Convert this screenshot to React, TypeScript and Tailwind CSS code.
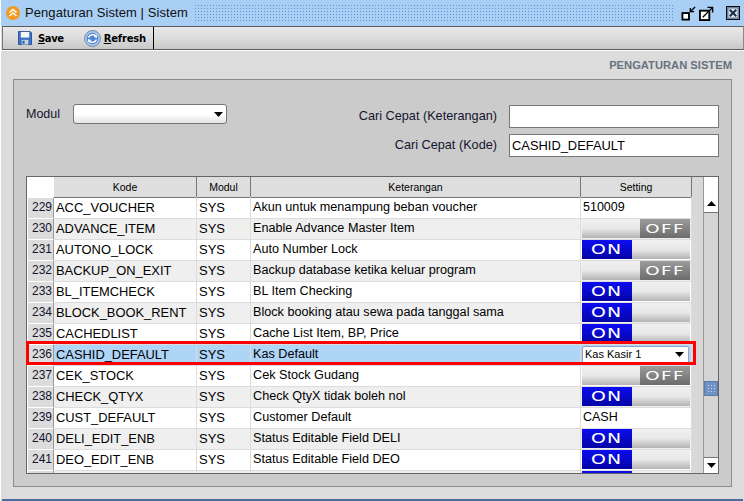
import React from "react";

const rows: [string, string, string, string, string][] = [
  ["229", "ACC_VOUCHER", "SYS", "Akun untuk menampung beban voucher", "510009"],
  ["230", "ADVANCE_ITEM", "SYS", "Enable Advance Master Item", "off"],
  ["231", "AUTONO_LOCK", "SYS", "Auto Number Lock", "on"],
  ["232", "BACKUP_ON_EXIT", "SYS", "Backup database ketika keluar program", "off"],
  ["233", "BL_ITEMCHECK", "SYS", "BL Item Checking", "on"],
  ["234", "BLOCK_BOOK_RENT", "SYS", "Block booking atau sewa pada tanggal sama", "on"],
  ["235", "CACHEDLIST", "SYS", "Cache List Item, BP, Price", "on"],
  ["236", "CASHID_DEFAULT", "SYS", "Kas Default", "select"],
  ["237", "CEK_STOCK", "SYS", "Cek Stock Gudang", "off"],
  ["238", "CHECK_QTYX", "SYS", "Check QtyX tidak boleh nol", "on"],
  ["239", "CUST_DEFAULT", "SYS", "Customer Default", "CASH"],
  ["240", "DELI_EDIT_ENB", "SYS", "Status Editable Field DELI", "on"],
  ["241", "DEO_EDIT_ENB", "SYS", "Status Editable Field DEO", "on"],
  ["", "", "", "", "blank"],
];

const cols = "grid grid-cols-[27px_143px_54px_330px_111px]";

function Arrow({ up }: { up?: boolean }) {
  return (
    <svg width="9" height="5" viewBox="0 0 9 5" className="block">
      <polygon points={up ? "4.5,0 9,5 0,5" : "0,0 9,0 4.5,5"} fill="#000" />
    </svg>
  );
}

const grayPart = "flex-1 bg-gradient-to-b from-[#f0f0f0] via-[#e8e8e8] to-[#b4b4b4]";

function Toggle({ kind }: { kind: string }) {
  return (
    <div className="ml-[1px] flex h-[19px] w-[108px] overflow-hidden leading-[19px] text-white [font-family:'DejaVu_Sans',sans-serif]">
      {kind !== "off" ? (
        <>
          <div className="flex w-[50px] items-center justify-center bg-gradient-to-b from-[#0c0cf2] to-[#0505a6]">
            {kind === "on" && <span className="inline-block scale-x-[1.35] text-[14px] tracking-[1px]">ON</span>}
          </div>
          <div className={grayPart} />
        </>
      ) : (
        <>
          <div className={grayPart} />
          <div className="flex w-[50px] items-center justify-center bg-gradient-to-b from-[#9c9c9c] to-[#6c6c6c]">
            <span className="inline-block scale-x-[1.4] text-[13px] tracking-[1px]">OFF</span>
          </div>
        </>
      )}
    </div>
  );
}

function Setting({ v }: { v: string }) {
  if (v === "on" || v === "off" || v === "blank") return <Toggle kind={v} />;
  if (v === "select")
    return (
      <div className="ml-[1px] flex h-[18px] w-[107px] items-center justify-between rounded-[2px] border border-[#8ea4c4] bg-white pl-[2px] pr-[4px] text-[11px] leading-none">
        <span>Kas Kasir 1</span>
        <Arrow />
      </div>
    );
  return <span className="pl-[2px] text-[12.5px]">{v}</span>;
}

function Save() {
  return (
    <svg width="14" height="14" viewBox="0 0 15 15" className="shrink-0">
      <path d="M0.5 0.5H13L14.5 2V14.5H0.5Z" fill="#3f73c8" stroke="#27508f" />
      <rect x="3" y="1" width="9" height="6" fill="#f4f6fa" />
      <rect x="4" y="9.5" width="7" height="5" fill="#c9d4e6" />
      <rect x="5" y="10.5" width="2" height="3" fill="#27508f" />
    </svg>
  );
}

function Refresh() {
  return (
    <svg width="17" height="17" viewBox="0 0 17 17" className="block">
      <circle cx="8.5" cy="8.5" r="8" fill="#a9c4e6" stroke="#6f8db5" />
      <circle cx="8.5" cy="8.5" r="5.8" fill="#4f86d8" />
      <path d="M4.5 7.5A4.2 4.2 0 0 1 12 6.5" fill="none" stroke="#fff" strokeWidth="1.5" />
      <path d="M12.5 9.5A4.2 4.2 0 0 1 5 10.5" fill="none" stroke="#fff" strokeWidth="1.5" />
      <polygon points="12.8,4.5 13,8 9.8,7" fill="#fff" />
      <polygon points="4.2,12.5 4,9 7.2,10" fill="#fff" />
    </svg>
  );
}

export default function App() {
  return (
    <div className="relative flex h-[501px] w-[744px] flex-col overflow-hidden border-l border-l-white bg-[#dcdcdc] text-[12px] text-black [font-family:'Liberation_Sans',Arial,sans-serif]">
      <div className="flex h-[26px] shrink-0 items-center bg-[#a9cff5] pl-[5px] pr-[4px]">
        <svg width="14" height="14" viewBox="0 0 14 14" className="shrink-0">
          <circle cx="7" cy="7" r="7" fill="#f29a1f" />
          <path d="M3.5 6.5L7 3.5L10.5 6.5M3.5 10L7 7L10.5 10" fill="none" stroke="#fff" strokeWidth="1.6" />
        </svg>
        <span className="ml-[5px] whitespace-nowrap text-[13px] tracking-[0.08px] text-[#111]">Pengaturan Sistem | Sistem</span>
        <div className="ml-[6px] h-[18px] flex-1 bg-[radial-gradient(#5d92d2_0.9px,transparent_1px)] [background-size:3px_3px]" />
        <div className="ml-[6px] flex items-center">
          <svg width="15" height="15" viewBox="0 0 16 16">
            <rect x="1.5" y="7.5" width="7" height="7" fill="#fff" stroke="#000" strokeWidth="2" />
            <path d="M15 1L10 6M10 2V6H14" fill="none" stroke="#000" strokeWidth="1.5" />
          </svg>
          <svg width="15" height="15" viewBox="0 0 16 16" className="ml-[3px]">
            <rect x="1" y="5" width="10" height="10" fill="#fff" stroke="#000" strokeWidth="2" />
            <path d="M4 12L14 2M9 1.5H14.5V7" fill="none" stroke="#000" strokeWidth="1.5" />
          </svg>
          <svg width="14" height="14" viewBox="0 0 15 15" className="ml-[12px]">
            <rect x="0.5" y="0.5" width="14" height="14" fill="#a9cff5" stroke="#000" />
            <rect x="2" y="2" width="11" height="11" fill="#d7e5f5" stroke="#40506a" />
            <path d="M4 4L11 11M11 4L4 11" stroke="#1a2a44" strokeWidth="2" />
          </svg>
        </div>
      </div>

      <div className="ml-[1px] flex h-[24px] shrink-0 border-y border-y-[#5a5a5a] border-l border-l-[#777] border-r border-r-[#8a8a8a] bg-gradient-to-b from-[#e8e8e8] via-[#dcdcdc] to-[#c8c8c8]">
        <div className="flex h-full w-[151px] items-center border-r border-r-black pl-[15px] text-[10px] font-bold [font-family:'DejaVu_Sans',sans-serif]">
          <Save />
          <span className="ml-[6px] tracking-[-0.4px]"><u>S</u>ave</span>
          <span className="ml-[20px]"><Refresh /></span>
          <span className="ml-[3px] tracking-[-0.2px]"><u>R</u>efresh</span>
        </div>
      </div>
      <div className="h-[1px] shrink-0 bg-white" />

      <div className="flex flex-1 flex-col pb-[14px] pl-[12px] pr-[12px]">
        <div className="h-[28px] shrink-0 pt-[8px] text-right text-[11.2px] font-bold leading-[13px] text-[#68727e]">PENGATURAN SISTEM</div>
        <div className="flex flex-1 flex-col border border-[#8c8c8c] bg-[#cbcbcb] pl-[12px] pr-[12px] pt-[25px]">
          <div className="flex shrink-0 justify-between">
            <div className="flex items-start">
              <span className="text-[12.5px] text-[#14142e]">Modul</span>
              <div className="ml-[13px] mt-[-1px] flex h-[20px] w-[154px] items-center justify-end rounded-[3px] border border-[#777] bg-gradient-to-b from-white via-white to-[#e4e4e4] pr-[3px]">
                <Arrow />
              </div>
            </div>
            <div className="grid grid-cols-[auto_210px] items-center gap-x-[12px] gap-y-[6px]">
              <span className="text-right text-[12.7px] text-[#14142e]">Cari Cepat (Keterangan)</span>
              <div className="h-[23px] border border-[#777] bg-white" />
              <span className="text-right text-[12.7px] text-[#14142e]">Cari Cepat (Kode)</span>
              <div className="flex h-[23px] items-center border border-[#777] bg-white pl-[2px] text-[12.9px]">CASHID_DEFAULT</div>
            </div>
          </div>

          <div className="mt-[19px] flex h-[298px] overflow-hidden border border-[#666] bg-[#d8d8d8]">
            <div className="w-[665px] shrink-0">
              <div className={`${cols} h-[20px] text-center text-[10.5px]`}>
                <div className="bg-white" />
                {["Kode", "Modul", "Keterangan", "Setting"].map((h) => (
                  <div key={h} className="border-b border-r border-[#777] bg-[#dedede] leading-[20px]">{h}</div>
                ))}
              </div>
              {rows.map((r, i) => {
                const sel = r[0] === "236";
                const bg = sel ? "bg-[#aed4f6]" : i % 2 === 0 ? "bg-white" : "bg-[#efefef]";
                return (
                  <div key={i} className={`${cols} h-[21px] leading-[21px] ${bg}`}>
                    <div className="border border-b-[#999] border-r-[#999] border-l-white border-t-white bg-[#dcdcdc] pr-[1px] text-right text-[12px] leading-[19px] text-[#14142e]">{r[0]}</div>
                    <div className="border-b border-r border-[#dcdcdc] pl-[2px] text-[12.9px]">{r[1]}</div>
                    <div className="border-b border-r border-[#dcdcdc] pl-[2px] text-[13px]">{r[2]}</div>
                    <div className="border-b border-r border-[#dcdcdc] pl-[2px] text-[12.65px]">{r[3]}</div>
                    <div className="flex items-center border-b border-r border-[#dcdcdc]"><Setting v={r[4]} /></div>
                  </div>
                );
              })}
            </div>
            <div className="ml-[11px] flex w-[15px] shrink-0 flex-col border-l border-[#999]">
              <div className="h-[20px] bg-white" />
              <div className="flex h-[16px] items-center justify-center border-b border-[#777] bg-white pb-[3px]"><Arrow up /></div>
              <div className="relative flex-1 bg-[#d4d4d4]">
                <div className="absolute inset-x-0 top-[168px] flex h-[15px] items-center justify-center border border-[#5a7ba8] bg-[#6f93c4]">
                  <div className="h-[9px] w-[9px] bg-[radial-gradient(#c8d8f0_0.7px,transparent_0.8px)] [background-size:3px_3px]" />
                </div>
              </div>
              <div className="flex h-[16px] items-center justify-center border-t border-[#777] bg-white"><Arrow /></div>
            </div>
          </div>
        </div>
      </div>

      <div className="absolute left-[25px] top-[341px] h-[24px] w-[670px] border-[3px] border-[#f00]" />
      <div className="absolute inset-x-[1px] bottom-0 h-[2px] bg-[#4a6d9c]" />
    </div>
  );
}
